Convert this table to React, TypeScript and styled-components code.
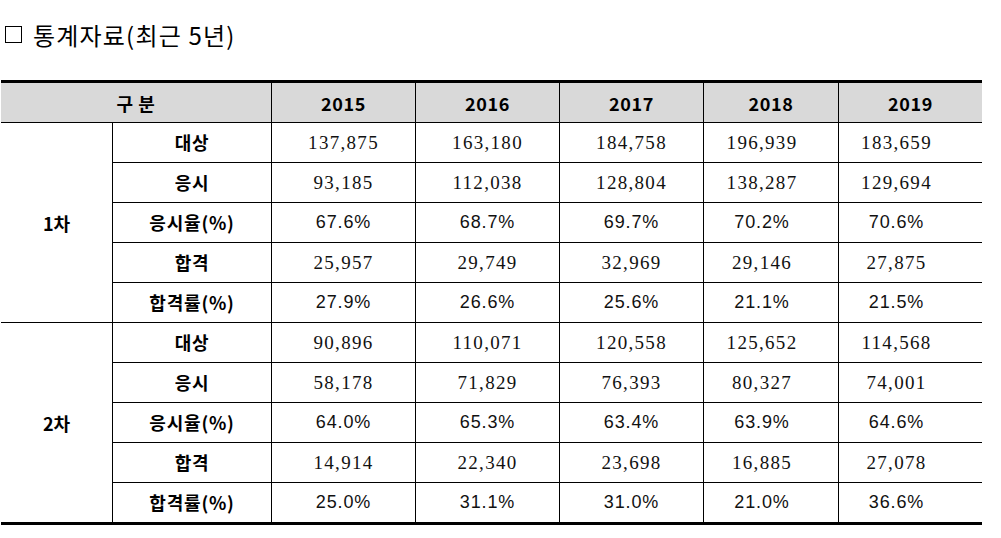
import React from "react";
import styled, { createGlobalStyle } from "styled-components";

const Global = createGlobalStyle`
  *, *::before, *::after { box-sizing: border-box; }
  html, body { margin: 0; padding: 0; background: #ffffff; }
  body { font-family: "Noto Sans CJK KR", "Noto Sans", sans-serif; color: #000; }
`;

const Page = styled.div`
  width: 1001px;
  height: 538px;
  padding: 0 0 0 1px;
  display: flex;
  flex-direction: column;
  overflow: hidden;
`;

const Title = styled.h2`
  margin: 0;
  height: 80px;
  padding: 18px 0 0 4px;
  font-family: "Noto Sans CJK KR", sans-serif;
  font-weight: 400;
  font-size: 24px;
  letter-spacing: 1.2px;
  line-height: 34px;
  display: flex;
  align-items: flex-start;
  gap: 11px;
`;

const Box = styled.span`
  display: inline-block;
  flex: none;
  width: 17px;
  height: 17px;
  border: 1px solid #000;
  margin-top: 8px;
`;

const Table = styled.table`
  width: 981px;
  table-layout: fixed;
  border-collapse: separate;
  border-spacing: 0;
  border-top: 3px solid #000;
  border-bottom: 3px solid #000;
`;

const Col = styled.col<{ $w: number }>`
  width: ${(p) => p.$w}px;
`;

const HeadCell = styled.th<{ $divider?: boolean }>`
  height: 40px;
  padding: 0;
  background: #d9d9d9;
  border-bottom: 1px solid #000;
  border-left: ${(p) => (p.$divider ? "1px solid #000" : "none")};
  font-family: "Noto Sans CJK KR", sans-serif;
  font-weight: 700;
  font-size: 18px;
  letter-spacing: 0.6px;
  text-align: center;
  vertical-align: middle;
`;

const GroupCell = styled.td<{ $last?: boolean }>`
  padding: 0;
  border-bottom: ${(p) => (p.$last ? "none" : "1px solid #000")};
  font-family: "Noto Sans CJK KR", sans-serif;
  font-weight: 700;
  font-size: 18px;
  text-align: center;
  vertical-align: middle;
`;

const LabelCell = styled.td<{ $last?: boolean }>`
  height: ${(p) => (p.$last ? "39px" : "40px")};
  padding: 0 0 2px;
  border-left: 1px solid #000;
  border-bottom: ${(p) => (p.$last ? "none" : "1px solid #000")};
  font-family: "Noto Sans CJK KR", sans-serif;
  font-weight: 700;
  font-size: 18px;
  letter-spacing: 0.8px;
  text-align: center;
  vertical-align: middle;
`;

const ValueCell = styled.td<{ $last?: boolean; $shift: number; $pct?: boolean }>`
  padding: 0 ${(p) => p.$shift}px 0 0;
  border-left: 1px solid #000;
  border-bottom: ${(p) => (p.$last ? "none" : "1px solid #000")};
  font-family: ${(p) =>
    p.$pct ? '"Liberation Sans", Arial, sans-serif' : '"Liberation Serif", "Times New Roman", serif'};
  font-size: ${(p) => (p.$pct ? "18px" : "19px")};
  letter-spacing: ${(p) => (p.$pct ? "0.9px" : "1.3px")};
  color: #111;
  text-align: center;
  vertical-align: middle;
  white-space: nowrap;
`;

const colWidths = [111, 159, 144, 144, 144, 135, 144];
const years = ["2015", "2016", "2017", "2018", "2019"];
const shifts = [0, 0, 0, 18, 28];

type Row = { label: string; values: string[] };
type Group = { name: string; rows: Row[] };

const groups: Group[] = [
  {
    name: "1차",
    rows: [
      { label: "대상", values: ["137,875", "163,180", "184,758", "196,939", "183,659"] },
      { label: "응시", values: ["93,185", "112,038", "128,804", "138,287", "129,694"] },
      { label: "응시율(%)", values: ["67.6%", "68.7%", "69.7%", "70.2%", "70.6%"] },
      { label: "합격", values: ["25,957", "29,749", "32,969", "29,146", "27,875"] },
      { label: "합격률(%)", values: ["27.9%", "26.6%", "25.6%", "21.1%", "21.5%"] },
    ],
  },
  {
    name: "2차",
    rows: [
      { label: "대상", values: ["90,896", "110,071", "120,558", "125,652", "114,568"] },
      { label: "응시", values: ["58,178", "71,829", "76,393", "80,327", "74,001"] },
      { label: "응시율(%)", values: ["64.0%", "65.3%", "63.4%", "63.9%", "64.6%"] },
      { label: "합격", values: ["14,914", "22,340", "23,698", "16,885", "27,078"] },
      { label: "합격률(%)", values: ["25.0%", "31.1%", "31.0%", "21.0%", "36.6%"] },
    ],
  },
];

export default function App() {
  return (
    <>
      <Global />
      <Page>
        <Title>
          <Box />
          <span>통계자료(최근 5년)</span>
        </Title>
        <Table>
          <colgroup>
            {colWidths.map((w, i) => (
              <Col key={i} $w={w} />
            ))}
          </colgroup>
          <thead>
            <tr>
              <HeadCell colSpan={2}>구 분</HeadCell>
              {years.map((y) => (
                <HeadCell key={y} $divider>
                  {y}
                </HeadCell>
              ))}
            </tr>
          </thead>
          <tbody>
            {groups.map((g, gi) => {
              const lastGroup = gi === groups.length - 1;
              return g.rows.map((r, ri) => {
                const last = lastGroup && ri === g.rows.length - 1;
                return (
                  <tr key={g.name + r.label}>
                    {ri === 0 && (
                      <GroupCell rowSpan={g.rows.length} $last={lastGroup}>
                        {g.name}
                      </GroupCell>
                    )}
                    <LabelCell $last={last}>{r.label}</LabelCell>
                    {r.values.map((v, vi) => (
                      <ValueCell key={vi} $last={last} $shift={shifts[vi]} $pct={v.endsWith("%")}>
                        {v}
                      </ValueCell>
                    ))}
                  </tr>
                );
              });
            })}
          </tbody>
        </Table>
      </Page>
    </>
  );
}
